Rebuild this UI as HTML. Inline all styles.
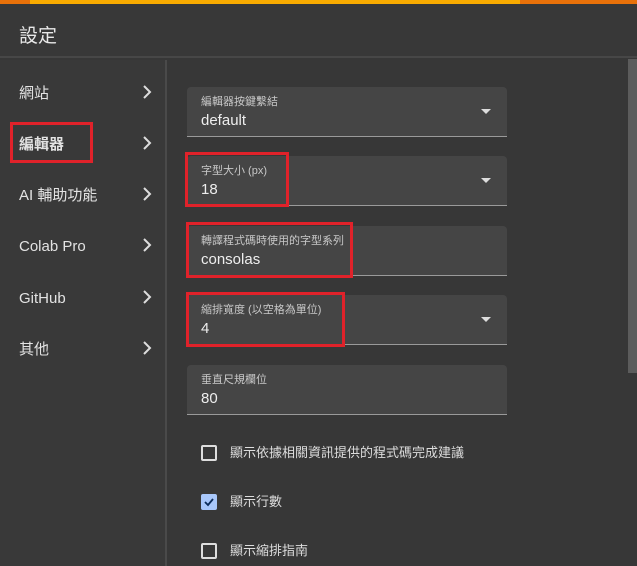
<!DOCTYPE html>
<html><head><meta charset="utf-8"><style>
*{margin:0;padding:0;box-sizing:border-box}
body{width:637px;height:566px;overflow:hidden;background:#373737;font-family:"Liberation Sans","Noto Sans CJK TC",sans-serif;color:#e3e3e3;position:relative}
div{line-height:1}
.abs{position:absolute}
.top{left:0;top:0;width:637px;height:4px;background:linear-gradient(90deg,#e8710a 0,#e8710a 30px,#f9ab00 30px,#f9ab00 520px,#e8710a 520px)}
.hdr{left:0;top:4px;width:637px;height:54px;background:#383838;border-bottom:2px solid #474747}
.hdr span{position:absolute;left:19px;top:23px;font-size:19px;line-height:20px;color:#e8e8e8}
.side{left:0;top:60px;width:167px;height:506px;background:#393939;border-right:2px solid #4a4a4a}
.item{position:absolute;left:19px;font-size:15px;line-height:16px;height:16px;color:#e3e3e3}
.chev{position:absolute;left:140px;width:14px;height:14px}
.field{position:absolute;left:187px;width:320px;height:50px;background:#454545;border-radius:4px 4px 0 0;border-bottom:1px solid #9a9a9a}
.field .l{position:absolute;left:14px;top:9px;font-size:11px;line-height:12px;color:#c8c8c8}
.field .v{position:absolute;left:14px;top:26px;font-size:15px;line-height:16px;color:#eee}
.field .dd{position:absolute;left:294px;top:22px;width:0;height:0;border-left:5px solid transparent;border-right:5px solid transparent;border-top:5px solid #ddd}
.red{position:absolute;border:3px solid #e0222a}
.cb{position:absolute;left:201px;width:16px;height:16px;border:2px solid #ddd;border-radius:2px}
.ct{position:absolute;left:230px;font-size:13px;line-height:14px;color:#ddd}
.sb{left:628px;top:59px;width:9px;height:314px;background:#5c5c5c}
</style></head><body>
<div class="abs top"></div>
<div class="abs hdr"><span>設定</span></div>
<div class="abs side"></div>
<div class="abs sb"></div>
<div class="item" style="top:86px">網站</div>
<div class="item" style="top:137px;font-weight:bold">編輯器</div>
<div class="item" style="top:188px">AI 輔助功能</div>
<div class="item" style="top:239px">Colab Pro</div>
<div class="item" style="top:291px">GitHub</div>
<div class="item" style="top:342px">其他</div>
<svg class="chev" style="top:85px" viewBox="0 0 14 14"><path d="M4 1l6 6-6 6" fill="none" stroke="#ddd" stroke-width="2"/></svg>
<svg class="chev" style="top:136px" viewBox="0 0 14 14"><path d="M4 1l6 6-6 6" fill="none" stroke="#ddd" stroke-width="2"/></svg>
<svg class="chev" style="top:187px" viewBox="0 0 14 14"><path d="M4 1l6 6-6 6" fill="none" stroke="#ddd" stroke-width="2"/></svg>
<svg class="chev" style="top:238px" viewBox="0 0 14 14"><path d="M4 1l6 6-6 6" fill="none" stroke="#ddd" stroke-width="2"/></svg>
<svg class="chev" style="top:290px" viewBox="0 0 14 14"><path d="M4 1l6 6-6 6" fill="none" stroke="#ddd" stroke-width="2"/></svg>
<svg class="chev" style="top:341px" viewBox="0 0 14 14"><path d="M4 1l6 6-6 6" fill="none" stroke="#ddd" stroke-width="2"/></svg>
<div class="red" style="left:10px;top:122px;width:83px;height:41px"></div>

<div class="field" style="top:87px"><div class="l">編輯器按鍵繫結</div><div class="v">default</div><div class="dd"></div></div>
<div class="field" style="top:156px"><div class="l">字型大小 (px)</div><div class="v">18</div><div class="dd"></div></div>
<div class="field" style="top:226px"><div class="l">轉譯程式碼時使用的字型系列</div><div class="v">consolas</div></div>
<div class="field" style="top:295px"><div class="l">縮排寬度 (以空格為單位)</div><div class="v">4</div><div class="dd"></div></div>
<div class="field" style="top:365px"><div class="l">垂直尺規欄位</div><div class="v">80</div></div>
<div class="red" style="left:185px;top:152px;width:104px;height:55px"></div>
<div class="red" style="left:186px;top:222px;width:167px;height:56px"></div>
<div class="red" style="left:186px;top:292px;width:159px;height:55px"></div>

<div class="cb" style="top:445px"></div><div class="ct" style="top:446px">顯示依據相關資訊提供的程式碼完成建議</div>
<div class="cb" style="top:494px;background:#a8c7fa;border-color:#a8c7fa"><svg width="12" height="12" viewBox="0 0 12 12" style="position:absolute;left:0;top:0"><path d="M2 6l3 3 5-6" fill="none" stroke="#0b2c5a" stroke-width="1.8"/></svg></div><div class="ct" style="top:495px">顯示行數</div>
<div class="cb" style="top:543px"></div><div class="ct" style="top:544px">顯示縮排指南</div>
</body></html>
